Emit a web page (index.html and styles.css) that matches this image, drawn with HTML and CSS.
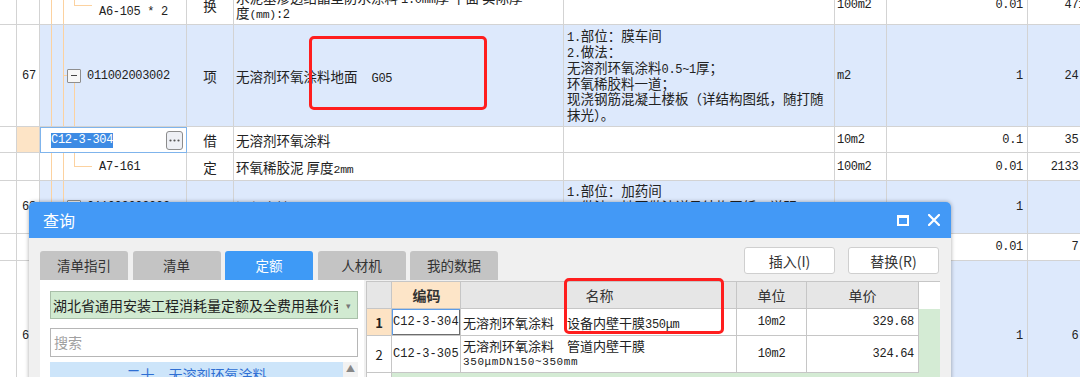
FILE: index.html
```html
<!DOCTYPE html>
<html lang="zh-CN">
<head>
    <meta charset="UTF-8">
    <meta name="viewport" content="width=device-width, initial-scale=1.0">
    <title>查询</title>
    <link rel="stylesheet" href="styles.css">
</head>
<body>
<div class="screen">
    <div class="sheet">
        <div class="row r-top">
            <div class="cell c0"></div>
            <div class="cell c1"></div>
            <div class="cell c2 tree leaf">
                <span class="elbow e-top"></span>
                <span class="lines">
                    <span class="ln mono">A6-105</span>
                    <span class="ln mono">A6-105 * 2</span>
                </span>
            </div>
            <div class="cell c3 center">换</div>
            <div class="cell c4">
                <span class="lines">
                    <span class="ln">水泥基渗透结晶型防水涂料 <span class="mono">1.0mm</span>厚 平面 实际厚</span>
                    <span class="ln">度<span class="mono sm">(mm)</span><span class="mono">:2</span></span>
                </span>
            </div>
            <div class="cell c5"></div>
            <div class="cell c6 mono">100m2</div>
            <div class="cell c7 mono right">0.01</div>
            <div class="cell c8 mono right">471.5</div>
        </div>

        <div class="row r-67 blue">
            <div class="cell c0"></div>
            <div class="cell c1 mono">67</div>
            <div class="cell c2 tree open">
                <span class="stub"></span>
                <span class="toggle"></span>
                <span class="mono">011002003002</span>
            </div>
            <div class="cell c3 center">项</div>
            <div class="cell c4"><span class="txt">无溶剂环氧涂料地面<span class="mono gap">G05</span></span></div>
            <div class="cell c5">
                <span class="lines feat">
                    <span class="ln"><span class="mono">1.</span>部位：膜车间</span>
                    <span class="ln"><span class="mono">2.</span>做法：</span>
                    <span class="ln">无溶剂环氧涂料<span class="mono">0.5~1</span>厚；</span>
                    <span class="ln">环氧稀胶料一道；</span>
                    <span class="ln">现浇钢筋混凝土楼板（详结构图纸，随打随</span>
                    <span class="ln">抹光）。</span>
                </span>
            </div>
            <div class="cell c6 mono">m2</div>
            <div class="cell c7 mono right">1</div>
            <div class="cell c8 mono right">24.37</div>
        </div>

        <div class="row r-c12">
            <div class="cell c0"></div>
            <div class="cell c1 cur"></div>
            <div class="cell c2 editor">
                <span class="mono sel">C12-3-304</span>
                <span class="more">
                    <svg width="11" height="3" viewBox="0 0 11 3"><circle cx="1.5" cy="1.5" r="1.1" fill="#555"/><circle cx="5.5" cy="1.5" r="1.1" fill="#555"/><circle cx="9.5" cy="1.5" r="1.1" fill="#555"/></svg>
                </span>
            </div>
            <div class="cell c3 center">借</div>
            <div class="cell c4">无溶剂环氧涂料</div>
            <div class="cell c5"></div>
            <div class="cell c6 mono">10m2</div>
            <div class="cell c7 mono right">0.1</div>
            <div class="cell c8 mono right">35.29</div>
        </div>

        <div class="row r-a7">
            <div class="cell c0"></div>
            <div class="cell c1"></div>
            <div class="cell c2 tree leaf">
                <span class="elbow e-a7"></span>
                <span class="mono">A7-161</span>
            </div>
            <div class="cell c3 center">定</div>
            <div class="cell c4"><span class="txt">环氧稀胶泥 厚度<span class="mono sm">2mm</span></span></div>
            <div class="cell c5"></div>
            <div class="cell c6 mono">100m2</div>
            <div class="cell c7 mono right">0.01</div>
            <div class="cell c8 mono right">2133.56</div>
        </div>

        <div class="row r-68 blue">
            <div class="cell c0"></div>
            <div class="cell c1 mono">68</div>
            <div class="cell c2 tree open">
                <span class="stub"></span>
                <span class="toggle"></span>
                <span class="mono">011002003003</span>
            </div>
            <div class="cell c3 center">项</div>
            <div class="cell c4"><span class="txt">混凝土地面<span class="mono gap">G06</span></span></div>
            <div class="cell c5 top">
                <span class="lines feat">
                    <span class="ln"><span class="mono">1.</span>部位：加药间</span>
                    <span class="ln"><span class="mono">2.</span>做法：地面做法详见结构图纸，说明</span>
                </span>
            </div>
            <div class="cell c6"></div>
            <div class="cell c7 mono right">1</div>
            <div class="cell c8"></div>
        </div>

        <div class="row r-69">
            <div class="cell c0"></div>
            <div class="cell c1"></div>
            <div class="cell c2 tree"></div>
            <div class="cell c3"></div>
            <div class="cell c4"></div>
            <div class="cell c5"></div>
            <div class="cell c6"></div>
            <div class="cell c7 mono right">0.01</div>
            <div class="cell c8 mono right">7.85</div>
        </div>

        <div class="row r-70 blue">
            <div class="cell c0"></div>
            <div class="cell c1 mono">69</div>
            <div class="cell c2 tree"></div>
            <div class="cell c3"></div>
            <div class="cell c4"></div>
            <div class="cell c5"></div>
            <div class="cell c6"></div>
            <div class="cell c7 mono right">1</div>
            <div class="cell c8 mono right">6.12</div>
        </div>
    </div>

    <div class="mark mark-1"></div>

    <div class="dialog">
        <div class="dlg-title">
            <span>查询</span>
            <span class="dlg-icons">
                <svg width="12" height="11" viewBox="0 0 12 11"><rect x="1" y="1.5" width="10" height="8.5" fill="none" stroke="#fff" stroke-width="2"/><rect x="0" y="0" width="12" height="3" fill="#fff"/></svg>
                <svg width="12" height="12" viewBox="0 0 12 12"><path d="M1 1 L11 11 M11 1 L1 11" stroke="#fff" stroke-width="2.2" stroke-linecap="square"/></svg>
            </span>
        </div>

        <div class="dlg-tools">
            <div class="tabs">
                <span class="tab">清单指引</span>
                <span class="tab">清单</span>
                <span class="tab active">定额</span>
                <span class="tab">人材机</span>
                <span class="tab">我的数据</span>
            </div>
            <div class="btns">
                <button type="button" class="btn">插入(I)</button>
                <button type="button" class="btn">替换(R)</button>
            </div>
        </div>

        <div class="dlg-main">
            <div class="side">
                <div class="picker">
                    <span class="picker-text">湖北省通用安装工程消耗量定额及全费用基价表</span>
                    <span class="picker-arrow">▾</span>
                </div>
                <div class="search">搜索</div>
                <div class="chapters">
                    <div class="chapter">二十、无溶剂环氧涂料</div>
                    <div class="vscroll"><span>▲</span></div>
                </div>
            </div>

            <div class="result">
                <div class="rrow rhead">
                    <div class="rc rh"></div>
                    <div class="rc code hl">编码</div>
                    <div class="rc name center">名称</div>
                    <div class="rc unit">单位</div>
                    <div class="rc price center">单价</div>
                    <div class="rfill"></div>
                </div>
                <div class="rrow r1">
                    <div class="rc rh cur">1</div>
                    <div class="rc code mono focus">C12-3-304</div>
                    <div class="rc name"><span class="txt">无溶剂环氧涂料　设备内壁干膜<span class="mono">350μm</span></span></div>
                    <div class="rc unit mono">10m2</div>
                    <div class="rc price mono">329.68</div>
                </div>
                <div class="rrow r2">
                    <div class="rc rh">2</div>
                    <div class="rc code mono">C12-3-305</div>
                    <div class="rc name">
                        <span class="lines two">
                            <span class="ln">无溶剂环氧涂料　管道内壁干膜</span>
                            <span class="ln mono tiny">350μmDN150~350mm</span>
                        </span>
                    </div>
                    <div class="rc unit mono">10m2</div>
                    <div class="rc price mono">324.64</div>
                </div>
                <div class="rrow r3">
                    <div class="rc rh"></div>
                </div>
            </div>
        </div>
    </div>

    <div class="mark mark-2"></div>
</div>
</body>
</html>
```

FILE: styles.css
```css
*{
    margin: 0;
    padding: 0;
    box-sizing: border-box;
}

body{
    font-family: "Noto Sans CJK SC", "Liberation Sans", sans-serif;
    color: #222;
    background: #fff;
}

.screen{
    position: relative;
    width: 1080px;
    height: 377px;
    overflow: hidden;
}

.mono{
    font-family: "Liberation Mono", "Noto Sans CJK SC", monospace;
    font-size: 12px;
    letter-spacing: -0.3px;
}

.mono.sm{
    font-size: 11.5px;
}

.mono.tiny{
    font-size: 11px;
    letter-spacing: 0.6px;
}

.mono.gap{
    margin-left: 14px;
}

.txt{
    white-space: nowrap;
}

.lines{
    display: block;
}

.ln{
    display: block;
    height: 15px;
    line-height: 15px;
    white-space: nowrap;
}

.feat .ln{
    height: 15.8px;
    line-height: 15.8px;
}

.two .ln{
    height: 17px;
    line-height: 17px;
}

/* background sheet */

.sheet{
    margin-top: -14px;
    font-size: 13.5px;
}

.row{
    display: flex;
}

.r-top{ height: 39px; }
.r-67{ height: 102px; }
.r-c12{ height: 26px; }
.r-a7{ height: 28px; }
.r-68{ height: 53px; }
.r-69{ height: 27px; }
.r-70{ height: 150px; }

.cell{
    flex: none;
    display: flex;
    align-items: center;
    overflow: hidden;
    white-space: nowrap;
    border-right: 1px solid #d3d3d3;
    border-bottom: 1px solid #d3d3d3;
    padding: 0 2px;
}

.cell.top{
    align-items: flex-start;
    padding-top: 2px;
}

.c0{ width: 17px; }
.c1{ width: 23px; padding-left: 5px; }
.c2{ width: 147px; }
.c3{ width: 47px; }
.c4{ width: 330px; }
.c5{ width: 271px; padding-left: 3px; }
.c6{ width: 52px; }
.c7{ width: 141px; padding-right: 4px; }
.c8{ width: 100px; padding-right: 28px; }

.center{ justify-content: center; }
.right{ justify-content: flex-end; }

.blue .c2, .blue .c3, .blue .c4, .blue .c5,
.blue .c6, .blue .c7, .blue .c8{
    background-color: #dde9fc;
}

.cur{
    background-color: #fde4c6;
}

/* tree guides */

.tree{
    background-image: linear-gradient(#fcd2a0, #fcd2a0), linear-gradient(#fcd2a0, #fcd2a0);
    background-size: 1px 100%, 1px 100%;
    background-position: 11px 0, 23px 0;
    background-repeat: no-repeat;
}

.tree.open{
    padding-left: 23px;
    background-image: linear-gradient(#fcd2a0, #fcd2a0), linear-gradient(#fcd2a0, #fcd2a0), linear-gradient(#fcd2a0, #fcd2a0);
    background-size: 1px 100%, 1px 100%, 1px 100%;
    background-position: 11px 0, 23px 0, 34px 58px;
}

.r-68 .tree.open{
    background-position: 11px 0, 23px 0, 34px 33px;
}

.tree.leaf{
    padding-left: 34px;
}

.elbow{
    align-self: flex-start;
    flex: none;
    width: 18px;
    border-left: 1px solid #fcd2a0;
    border-bottom: 1px solid #fcd2a0;
    margin-right: 7px;
}

.e-top{ height: 20px; }
.e-a7{ height: 14px; }

.stub{
    width: 4px;
    height: 1px;
    background: #fcd2a0;
}

.toggle{
    position: relative;
    flex: none;
    width: 14px;
    height: 14px;
    border: 1px solid #8e8e8e;
    border-radius: 1px;
    background: #f6f6f6;
    margin-right: 6px;
}

.toggle::before{
    content: "";
    position: absolute;
    left: 3px;
    top: 5px;
    width: 6px;
    height: 1px;
    background: #444;
}

.editor{
    border: 1px solid #7fb4ec;
    background: #fff;
    padding-left: 10px;
    padding-right: 3px;
}

.sel{
    background: #3d8be4;
    color: #fff;
    line-height: 15px;
}

.more{
    margin-left: auto;
    width: 17px;
    height: 19px;
    border: 1px solid #8c8c8c;
    border-radius: 3px;
    background: #eef0f5;
    display: flex;
    align-items: center;
    justify-content: center;
}

/* red annotations */

.mark{
    position: absolute;
    border: 3px solid #ff1e1e;
    border-radius: 5px;
    z-index: 5;
}

.mark-1{
    left: 309px;
    top: 36px;
    width: 178px;
    height: 74px;
}

.mark-2{
    left: 564px;
    top: 278px;
    width: 160px;
    height: 56px;
}

/* dialog */

.dialog{
    position: absolute;
    left: 29px;
    top: 202px;
    width: 922px;
    height: 200px;
    background: #f0f0f0;
    border-radius: 5px 5px 0 0;
    box-shadow: 0 0 4px rgba(0, 0, 0, 0.35);
    overflow: hidden;
    z-index: 3;
}

.dlg-title{
    height: 36px;
    background: #4399f6;
    color: #fff;
    font-size: 16px;
    display: flex;
    align-items: center;
    padding: 0 11px 0 14px;
}

.dlg-icons{
    margin-left: auto;
    display: flex;
    align-items: center;
    gap: 19px;
}

.dlg-tools{
    display: flex;
    height: 42px;
    padding: 9px 12px 0 11px;
}

.tabs{
    display: flex;
    gap: 4.5px;
    align-self: flex-end;
}

.tab{
    width: 88px;
    height: 29px;
    line-height: 29px;
    text-align: center;
    font-size: 13.5px;
    color: #333;
    background: #c4c4c4;
    border-radius: 3px 3px 0 0;
}

.tab.active{
    background: #3e9af6;
    color: #fff;
}

.btns{
    margin-left: auto;
    display: flex;
    gap: 13px;
    align-self: flex-start;
}

.btn{
    width: 91px;
    height: 27px;
    background: #fff;
    border: 1px solid #cfcfcf;
    border-radius: 3px;
    font-family: "Noto Sans CJK SC", "Liberation Sans", sans-serif;
    font-size: 14px;
    color: #333;
}

.dlg-main{
    display: flex;
    gap: 2px;
    padding-left: 11px;
}

.side{
    width: 324px;
    height: 120px;
    background: #fff;
    padding: 11px 6px 0 10px;
}

.picker{
    display: flex;
    align-items: center;
    height: 28px;
    background: #d1ead1;
    border: 1px solid #a9bfa9;
    padding-left: 2px;
    font-size: 14px;
    color: #222;
}

.picker-text{
    width: 285px;
    overflow: hidden;
    white-space: nowrap;
}

.picker-arrow{
    margin-left: auto;
    margin-right: 6px;
    font-size: 9px;
    color: #777;
}

.search{
    margin-top: 9px;
    height: 29px;
    border: 1px solid #b6b6b6;
    background: #fff;
    padding-left: 3px;
    line-height: 27px;
    font-size: 14px;
    color: #a0a0a0;
}

.chapters{
    display: flex;
    margin-top: 5px;
    height: 30px;
}

.chapter{
    flex: 1;
    background: #cde5fa;
    color: #2f6fd3;
    font-size: 14px;
    line-height: 24px;
    text-align: center;
}

.vscroll{
    width: 15px;
    background: #f2f2f2;
    color: #888;
    font-size: 9px;
    text-align: center;
    line-height: 14px;
}

/* result grid */

.result{
    width: 574px;
    height: 120px;
    margin-top: 1px;
    background: #d4ebd4;
    border-left: 1px solid #c6c6c6;
    border-top: 1px solid #c6c6c6;
    font-size: 13px;
}

.rrow{
    display: flex;
}

.rhead{ height: 27px; }
.r1{ height: 27px; }
.r2{ height: 37px; }
.r3{ height: 40px; }

.rc{
    flex: none;
    display: flex;
    align-items: center;
    white-space: nowrap;
    overflow: hidden;
    background: #fff;
    border-right: 1px solid #c6c6c6;
    border-bottom: 1px solid #c6c6c6;
}

.rhead .rc{
    background: #e6e6e6;
    justify-content: center;
    font-size: 14px;
    color: #333;
}

.rhead .rc.hl{
    background: #fde5c8;
    font-weight: bold;
}

.rc.rh{
    width: 25px;
    justify-content: center;
    font-size: 13px;
}

.r1 .rc.rh{
    font-weight: bold;
}

.r1 .rc.rh.cur{
    background: #fde3c4;
}

.r3 .rc.rh{
    border-bottom: none;
}

.rc.code{
    width: 69px;
    padding-left: 1px;
    letter-spacing: 0.1px;
}

.rc.code.focus{
    box-shadow: inset 1px 1px 0 #5c9ce8, inset -1px -1px 0 #6d6d6d;
}

.rc.name{
    width: 276px;
    padding-left: 2px;
}

.rc.unit{
    width: 70px;
    justify-content: center;
}

.rc.price{
    width: 112px;
    justify-content: flex-end;
    padding-right: 4px;
}

.rhead .rc.price{
    justify-content: center;
    padding-right: 0;
}

.rfill{
    width: 21px;
    background: #fff;
}
```
